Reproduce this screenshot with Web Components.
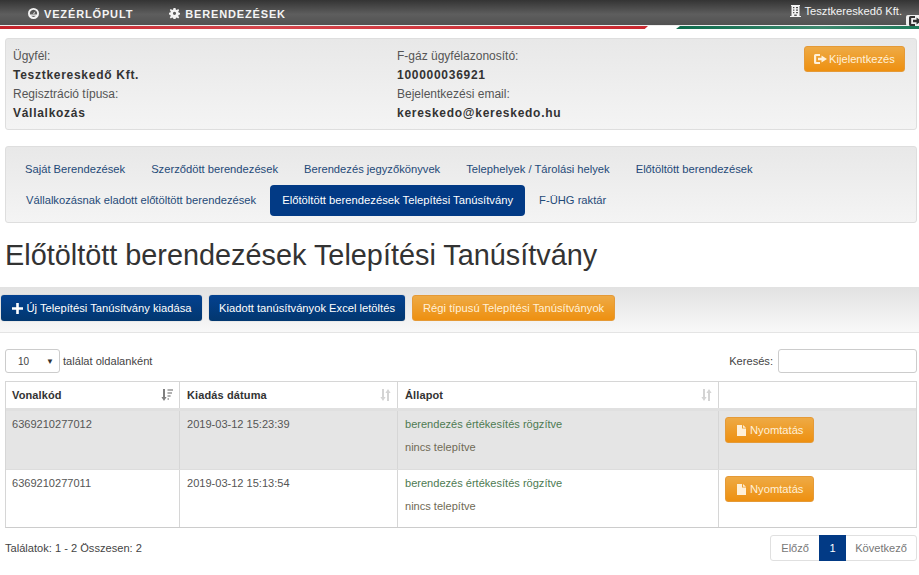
<!DOCTYPE html>
<html lang="hu">
<head>
<meta charset="utf-8">
<title>Előtöltött berendezések Telepítési Tanúsítvány</title>
<style>
  html, body {
    margin: 0;
    padding: 0;
    background: #ffffff;
    color: #333333;
    font-family: 'Liberation Sans', Arial, sans-serif;
    font-size: 11px;
    overflow: hidden;
  }
  body { height: 575px; width: 919px; }
</style>
</head>
<body>
<app-navbar></app-navbar>
<account-panel></account-panel>
<tab-panel>
  <tab-link>Saját Berendezések</tab-link>
  <tab-link>Szerződött berendezések</tab-link>
  <tab-link>Berendezés jegyzőkönyvek</tab-link>
  <tab-link>Telephelyek / Tárolási helyek</tab-link>
  <tab-link>Előtöltött berendezések</tab-link>
  <tab-link indent>Vállalkozásnak eladott előtöltött berendezések</tab-link>
  <tab-link active>Előtöltött berendezések Telepítési Tanúsítvány</tab-link>
  <tab-link>F-ÜHG raktár</tab-link>
</tab-panel>
<page-title>Előtöltött berendezések Telepítési Tanúsítvány</page-title>
<action-bar>
  <app-button variant="blue" icon="plus">Új Telepítési Tanúsítvány kiadása</app-button>
  <app-button variant="blue">Kiadott tanúsítványok Excel letöltés</app-button>
  <app-button variant="orange">Régi típusú Telepítési Tanúsítványok</app-button>
</action-bar>
<table-controls></table-controls>
<cert-table></cert-table>
<table-footer></table-footer>

<script>
const ICONS = {
  plus: '<svg width="11" height="11" viewBox="0 0 11 11"><path d="M4.2 0h2.6v4.2H11v2.6H6.8V11H4.2V6.8H0V4.2h4.2z" fill="currentColor"/></svg>',
  logout: '<svg width="13" height="10" viewBox="0 0 13 10"><path d="M1.5 0H6v2H2.2v6H6v2H1.5A1.5 1.5 0 0 1 0 8.5v-7A1.5 1.5 0 0 1 1.5 0zM7.5 1.6 13 5 7.5 8.4V6.3H4V3.7h3.5z" fill="currentColor"/></svg>',
  file: '<svg width="9" height="11" viewBox="0 0 9 11"><path d="M0 0h5v3.6h4V11H0zM6 0l3 2.7H6z" fill="currentColor"/></svg>',
  dashboard: '<svg width="11" height="11" viewBox="0 0 11 11"><path fill-rule="evenodd" d="M5.5 0a5.5 5.5 0 1 1 0 11 5.5 5.5 0 0 1 0-11zm0 1.8A3.7 3.7 0 0 0 2 6.6h7a3.7 3.7 0 0 0-3.5-4.8zM3 7.8a3.4 3.4 0 0 0 5 0z" fill="currentColor"/><path d="M5 5.4 7.4 3.2 6.2 6z" fill="currentColor"/></svg>',
  cog: '<svg width="11" height="11" viewBox="0 0 11 11"><path fill-rule="evenodd" d="M4.5 0h2l.3 1.6 1 .4L9.2 1l1 1.3-1 1.3.4 1 1.4.4v1.6l-1.4.4-.4 1 1 1.3-1 1.3-1.4-1-1 .4-.3 1.5h-2l-.3-1.5-1-.4-1.4 1-1-1.3 1-1.3-.4-1L0 6.4V4.8l1.4-.4.4-1-1-1.3L1.8 1l1.4 1 1-.4zm1 3.7a1.6 1.6 0 1 0 0 3.2 1.6 1.6 0 0 0 0-3.2z" fill="currentColor"/></svg>',
  building: '<svg width="11" height="12" viewBox="0 0 11 12"><path fill-rule="evenodd" d="M1 0h9v1H9.5v10H11v1H0v-1h1.5V1H1zm2 2v1.2h1.4V2zm3 0v1.2h2V2zM3 4.5v1.2h1.4V4.5zm3 0v1.2h2V4.5zM3 7v1.2h1.4V7zm3 0v1.2h2V7zM4.2 9.5V11h2.6V9.5z" fill="currentColor"/></svg>',
  sortBoth: '<svg width="11" height="12" viewBox="0 0 11 12"><path d="M2 0h2v8h1.6L3 12 .4 8H2zM7 12h2V4h1.6L8 0 5.4 4H7z" fill="currentColor"/></svg>',
  sortDesc: '<svg width="12" height="12" viewBox="0 0 12 12"><path d="M2 0h2v8h1.6L3 12 .4 8H2z" fill="#7f7f7f"/><path d="M6.5 0H12v2H6.5zM6.5 3H11v2H6.5zM6.5 6H9.6v2H6.5zM6.5 9H8v2H6.5z" fill="#b0b0b0"/></svg>'
};

// Shared helper, one shadow root per element
class BaseElement extends HTMLElement {
  constructor() {
    super();
    this.attachShadow( {mode: 'open'} );
  }

  _html( markup ) {
    this.shadowRoot.innerHTML = markup;
  }
}

class AppNavbar extends BaseElement {
  constructor() {
    super();
    this._html( /* template */ `
      <style>
        :host { display: block; height: 38px; position: relative; overflow: hidden; }
        .bar {
          align-items: center;
          background: linear-gradient( #343434, #5e5e5e 55%, #505050 );
          box-sizing: border-box;
          color: #f4f4f4;
          display: flex;
          height: 26px;
          padding: 0 0 0 28px;
        }
        .item {
          align-items: center;
          display: flex;
          font-size: 11px;
          font-weight: 700;
          gap: 5px;
          letter-spacing: .85px;
          margin-right: 36px;
          padding-top: 2px;
        }
        .item svg { position: relative; top: -1px; }
        .user {
          align-items: center;
          display: flex;
          font-size: 11.2px;
          gap: 3px;
          margin-left: auto;
          padding-bottom: 5px;
          padding-right: 17px;
        }
        .stripe { display: flex; border-top: 1px solid #eee; margin-top: -1px; height: 3px; }
        .red { background: linear-gradient( 90deg, #c4242b, #d5474d 40%, #c9282f ); clip-path: polygon( 0 0, 100% 0, 99.5% 100%, 0 100% ); width: 648px; }
        .gap { width: 28px; }
        .green { background: linear-gradient( 90deg, #0d6b4c, #3f8a70 60%, #1e7a5a ); clip-path: polygon( 4px 0, 100% 0, 100% 100%, 0 100% ); flex: 1; }
        .exit {
          align-items: center;
          background: #efefef;
          border-radius: 2px;
          color: #333;
          display: flex;
          height: 11px;
          left: 906px;
          padding-left: 3px;
          position: absolute;
          top: 15px;
          width: 20px;
        }
      </style>
      <div class="bar">
        <div class="item">${ICONS.dashboard}<span>VEZÉRLŐPULT</span></div>
        <div class="item">${ICONS.cog}<span>BERENDEZÉSEK</span></div>
        <div class="user">${ICONS.building}<span>Tesztkereskedő Kft.</span></div>
      </div>
      <div class="stripe"><div class="red"></div><div class="gap"></div><div class="green"></div></div>
      <div class="exit">${ICONS.logout}</div>
    ` );
  }
}

class AccountPanel extends BaseElement {
  constructor() {
    super();
    this._html( /* template */ `
      <style>
        :host {
          background: linear-gradient( #e8e8e8, #f4f4f4 );
          border: 1px solid #dedede;
          border-radius: 3px;
          box-sizing: border-box;
          display: flex;
          height: 92px;
          margin: 0 2px 16px 5px;
          padding: 8px 0 0 7px;
        }
        .col { width: 384px; }
        .col + .col { width: 407px; }
        .label { color: #555; font-size: 12px; height: 19px; line-height: 19px; }
        .value { color: #333; font-size: 12px; font-weight: 700; height: 19px; letter-spacing: .72px; line-height: 19px; }
        app-button { margin-top: -1px; padding: 0 9px; gap: 2px; }
      </style>
      <div class="col">
        <div class="label">Ügyfél:</div>
        <div class="value">Tesztkereskedő Kft.</div>
        <div class="label">Regisztráció típusa:</div>
        <div class="value">Vállalkozás</div>
      </div>
      <div class="col">
        <div class="label">F-gáz ügyfélazonosító:</div>
        <div class="value">100000036921</div>
        <div class="label">Bejelentkezési email:</div>
        <div class="value">kereskedo@kereskedo.hu</div>
      </div>
      <app-button variant="orange" icon="logout">Kijelentkezés</app-button>
    ` );
  }
}

class TabPanel extends BaseElement {
  constructor() {
    super();
    this._html( /* template */ `
      <style>
        :host {
          align-content: flex-start;
          background: linear-gradient( #e8e8e8, #f4f4f4 );
          border: 1px solid #dedede;
          border-radius: 3px;
          box-sizing: border-box;
          display: flex;
          flex-wrap: wrap;
          height: 77px;
          margin: 0 2px 0 5px;
          padding: 7px 6px;
        }
      </style>
      <slot></slot>
    ` );
  }
}

class TabLink extends BaseElement {
  constructor() {
    super();
    this._html( /* template */ `
      <style>
        :host {
          border-radius: 4px;
          box-sizing: border-box;
          color: #1f4a78;
          display: block;
          font-size: 11.2px;
          height: 31px;
          line-height: 31px;
          padding: 0 13px;
          white-space: nowrap;
        }
        :host( [indent] ) { margin-left: 1px; }
        :host( [active] ) {
          background: #023a85;
          color: #ffffff;
          font-size: 11.25px;
          margin: 0 1px;
          padding: 0 12px;
        }
      </style>
      <slot></slot>
    ` );
  }
}

class PageTitle extends BaseElement {
  constructor() {
    super();
    this._html( /* template */ `
      <style>
        :host {
          color: #333;
          display: block;
          font-size: 28.85px;
          height: 64px;
          line-height: 64px;
          padding-left: 5px;
          white-space: nowrap;
        }
      </style>
      <slot></slot>
    ` );
  }
}

class ActionBar extends BaseElement {
  constructor() {
    super();
    this._html( /* template */ `
      <style>
        :host {
          background: linear-gradient( #e2e2e2, #f8f8f8 );
          border-bottom: 1px solid #e4e4e4;
          box-sizing: border-box;
          display: flex;
          gap: 7px;
          height: 46px;
          padding: 8px 0 0 1px;
        }
      </style>
      <slot></slot>
    ` );
  }
}

class AppButton extends BaseElement {
  constructor() {
    super();
    const icon = this.getAttribute( 'icon' );
    this._html( /* template */ `
      <style>
        :host {
          align-items: center;
          border-radius: 3px;
          box-sizing: border-box;
          color: #fff;
          display: inline-flex;
          flex: none;
          font-size: 11.2px;
          gap: 3px;
          height: 26px;
          padding: 0 10px;
          white-space: nowrap;
        }
        :host( [variant=blue] ) {
          background: linear-gradient( #034190, #02376f );
          box-shadow: 0 0 1px rgba( 0, 0, 0, .4 );
        }
        :host( [variant=orange] ) {
          background: linear-gradient( #eeaa45, #ee9010 );
          border: 1px solid #e59a37;
          color: #fff0d8;
        }
        :host( [icon=plus] ) { gap: 4px; padding: 0 10.5px; }
        :host( [icon=file] ) { gap: 4px; padding: 0 10px 0 11px; }
        svg { display: block; }
      </style>
      ${icon ? ICONS[icon] : ''}<slot></slot>
    ` );
  }
}

class TableControls extends BaseElement {
  constructor() {
    super();
    this._html( /* template */ `
      <style>
        :host {
          align-items: center;
          color: #444;
          display: flex;
          font-size: 11.1px;
          height: 24px;
          margin: 16px 2px 8px 5px;
        }
        .select {
          align-items: center;
          background: #fff;
          border: 1px solid #ccc;
          border-radius: 3px;
          box-sizing: border-box;
          display: flex;
          font-size: 10px;
          height: 24px;
          justify-content: space-between;
          margin-right: 3px;
          padding: 0 5px 0 12px;
          width: 55px;
        }
        .arrow { font-size: 8px; color: #333; }
        .spacer { flex: 1; }
        .input {
          border: 1px solid #ccc;
          border-radius: 3px;
          box-sizing: border-box;
          height: 24px;
          margin-left: 5px;
          width: 139px;
        }
      </style>
      <div class="select"><span>10</span><span class="arrow">▼</span></div>
      <span>találat oldalanként</span>
      <div class="spacer"></div>
      <span>Keresés:</span>
      <div class="input"></div>
    ` );
  }
}

class CertTable extends BaseElement {
  constructor() {
    super();
    const rows = [
      ['6369210277012', '2019-03-12 15:23:39', true],
      ['6369210277011', '2019-03-12 15:13:54', false]
    ];
    const body = rows.map( ( [code, date, shaded] ) => /* template */ `
      <div class="row ${shaded ? 'shaded' : ''}">
        <div class="cell">${code}</div>
        <div class="cell">${date}</div>
        <div class="cell status">
          <div class="ok">berendezés értékesítés rögzítve</div>
          <div class="no">nincs telepítve</div>
        </div>
        <div class="cell"><app-button variant="orange" icon="file">Nyomtatás</app-button></div>
      </div>
    ` ).join( '' );

    this._html( /* template */ `
      <style>
        :host {
          border: 1px solid #d6d6d6;
          border-bottom-color: #ccc;
          box-sizing: border-box;
          display: block;
          margin: 0 2px 0 5px;
        }
        .row { display: grid; grid-template-columns: 173px 218px 321px 1fr; }
        .head {
          border-bottom: 3px solid #e0e0e0;
          box-sizing: border-box;
          font-weight: 700;
          height: 29px;
          letter-spacing: .12px;
        }
        .head .cell {
          align-items: center;
          color: #333;
          display: flex;
          font-size: 11px;
          justify-content: space-between;
          padding: 0 6px 1px 6px;
        }
        .head .cell + .cell { padding-left: 7px; }
        .head svg { display: block; }
        .cell { border-left: 1px solid #d6d6d6; box-sizing: border-box; color: #555; font-size: 11.05px; padding: 7px 6px 0; }
        .cell + .cell { padding-left: 7px; }
        .cell:first-child { border-left: 0; }
        .row.shaded { background: #e5e5e5; height: 59px; border-bottom: 1px solid #ddd; box-sizing: border-box; }
        .row.shaded + .row { height: 57px; }
        .ok { color: #4d7a52; height: 23px; }
        .no { color: #6f6a55; }
        .row:not( .head ) .cell:last-child { padding-left: 6px; padding-top: 6px; }
      </style>
      <div class="row head">
        <div class="cell">Vonalkód<span>${ICONS.sortDesc}</span></div>
        <div class="cell">Kiadás dátuma<span style="color:#d4d4d4">${ICONS.sortBoth}</span></div>
        <div class="cell">Állapot<span style="color:#d4d4d4">${ICONS.sortBoth}</span></div>
        <div class="cell"></div>
      </div>
      ${body}
    ` );
  }
}

class TableFooter extends BaseElement {
  constructor() {
    super();
    this._html( /* template */ `
      <style>
        :host {
          align-items: center;
          color: #444;
          display: flex;
          font-size: 11.1px;
          height: 26px;
          justify-content: space-between;
          margin: 7px 2px 0 5px;
        }
        .pages {
          border: 1px solid #e0e0e0;
          border-radius: 3px;
          box-sizing: border-box;
          display: flex;
          height: 26px;
        }
        .pages span { color: #777; line-height: 24px; padding: 0 10px; }
        .pages .on { background: #023a85; color: #fff; margin: -1px 0; line-height: 26px; padding: 0 10.5px; }
        .pages .next { padding: 0 9px; }
      </style>
      <span>Találatok: 1 - 2 Összesen: 2</span>
      <div class="pages"><span>Előző</span><span class="on">1</span><span class="next">Következő</span></div>
    ` );
  }
}

window.customElements.define( 'app-navbar', AppNavbar );
window.customElements.define( 'account-panel', AccountPanel );
window.customElements.define( 'tab-panel', TabPanel );
window.customElements.define( 'tab-link', TabLink );
window.customElements.define( 'page-title', PageTitle );
window.customElements.define( 'action-bar', ActionBar );
window.customElements.define( 'app-button', AppButton );
window.customElements.define( 'table-controls', TableControls );
window.customElements.define( 'cert-table', CertTable );
window.customElements.define( 'table-footer', TableFooter );
</script>
</body>
</html>
